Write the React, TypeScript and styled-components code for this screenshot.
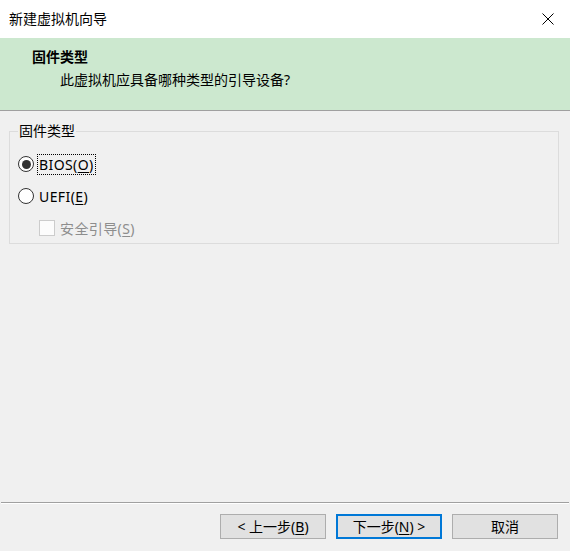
import React from 'react';
import styled, { createGlobalStyle } from 'styled-components';

const GlobalStyle = createGlobalStyle`
  html, body {
    margin: 0;
    padding: 0;
    background: #f0f0f0;
  }
  * {
    box-sizing: border-box;
  }
`;

const Window = styled.div`
  width: 570px;
  height: 551px;
  display: flex;
  flex-direction: column;
  background: #f0f0f0;
  font-family: 'Noto Sans', 'Noto Sans CJK SC', sans-serif;
  font-size: 14px;
  color: #000;
  overflow: hidden;
`;

const TitleBar = styled.div`
  height: 38px;
  flex-shrink: 0;
  display: flex;
  align-items: center;
  justify-content: space-between;
  background: #fff;
  padding-left: 9px;
`;

const Title = styled.span`
  line-height: 20px;
`;

const CloseButton = styled.div`
  width: 45px;
  height: 38px;
  display: flex;
  align-items: center;
  justify-content: center;
`;

const Header = styled.div`
  height: 73px;
  flex-shrink: 0;
  display: flex;
  flex-direction: column;
  gap: 3px;
  background: #cce8cf;
  border-bottom: 1px solid #a0a0a0;
  padding-top: 9px;
`;

const HeaderTitle = styled.div`
  padding-left: 32px;
  font-weight: 700;
  line-height: 20px;
`;

const HeaderText = styled.div`
  padding-left: 60px;
  line-height: 20px;
`;

const GroupBox = styled.fieldset`
  margin: 10px 11px 0 9px;
  padding: 11px 8px 3px 8px;
  border: 1px solid #dcdcdc;
  display: flex;
  flex-direction: column;
  gap: 8px;
`;

const Legend = styled.legend`
  padding: 0 1px;
  line-height: 20px;
`;

const OptionRow = styled.label<{ $indent?: number }>`
  height: 24px;
  display: flex;
  align-items: center;
  padding-left: ${({ $indent }) => $indent ?? 0}px;
`;

const RadioCircle = styled.span<{ $checked?: boolean }>`
  width: 16px;
  height: 16px;
  border-radius: 50%;
  border: 1.5px solid #333;
  background: #fff;
  display: flex;
  align-items: center;
  justify-content: center;
  flex-shrink: 0;

  &::after {
    content: '';
    width: 9px;
    height: 9px;
    border-radius: 50%;
    background: ${({ $checked }) => ($checked ? '#333' : 'transparent')};
  }
`;

const CheckBox = styled.span`
  width: 16px;
  height: 16px;
  border: 1px solid #cccccc;
  background: #fcfcfc;
  flex-shrink: 0;
`;

const OptionText = styled.span<{ $focused?: boolean; $disabled?: boolean }>`
  margin-left: ${({ $focused }) => ($focused ? '4px' : '5px')};
  padding: 0 ${({ $focused }) => ($focused ? '1px' : '0')};
  line-height: 19px;
  letter-spacing: 0.4px;
  color: ${({ $disabled }) => ($disabled ? '#8d8d8d' : '#000')};
  outline: ${({ $focused }) => ($focused ? '1px dotted #000' : 'none')};
`;

const Key = styled.u`
  text-underline-offset: 2px;
`;

const Spacer = styled.div`
  flex: 1;
`;

const Separator = styled.div`
  margin: 0 1px;
  height: 2px;
  flex-shrink: 0;
  border-top: 1px solid #a0a0a0;
  border-bottom: 1px solid #ffffff;
`;

const Footer = styled.div`
  height: 47px;
  flex-shrink: 0;
  display: flex;
  justify-content: flex-end;
  gap: 10px;
  padding: 10px 12px 0 0;
`;

const Button = styled.div<{ $default?: boolean }>`
  width: 106px;
  height: 25px;
  display: flex;
  align-items: center;
  justify-content: center;
  background: #e1e1e1;
  border: ${({ $default }) => ($default ? '2px solid #0078d7' : '1px solid #adadad')};
  line-height: 20px;
`;

const App: React.FC = () => {
  return (
    <>
      <GlobalStyle />
      <Window>
        <TitleBar>
          <Title>新建虚拟机向导</Title>
          <CloseButton>
            <svg width="12" height="12" viewBox="0 0 12 12">
              <path d="M0.5 0.5 L11.5 11.5 M11.5 0.5 L0.5 11.5" stroke="#000" strokeWidth="1" />
            </svg>
          </CloseButton>
        </TitleBar>

        <Header>
          <HeaderTitle>固件类型</HeaderTitle>
          <HeaderText>此虚拟机应具备哪种类型的引导设备?</HeaderText>
        </Header>

        <GroupBox>
          <Legend>固件类型</Legend>
          <OptionRow>
            <RadioCircle $checked />
            <OptionText $focused>
              BIOS(<Key>O</Key>)
            </OptionText>
          </OptionRow>
          <OptionRow>
            <RadioCircle />
            <OptionText>
              UEFI(<Key>E</Key>)
            </OptionText>
          </OptionRow>
          <OptionRow $indent={21}>
            <CheckBox />
            <OptionText $disabled>
              安全引导(<Key>S</Key>)
            </OptionText>
          </OptionRow>
        </GroupBox>

        <Spacer />
        <Separator />

        <Footer>
          <Button>
            &lt; 上一步(<Key>B</Key>)
          </Button>
          <Button $default>
            下一步(<Key>N</Key>) &gt;
          </Button>
          <Button>取消</Button>
        </Footer>
      </Window>
    </>
  );
};

export default App;
